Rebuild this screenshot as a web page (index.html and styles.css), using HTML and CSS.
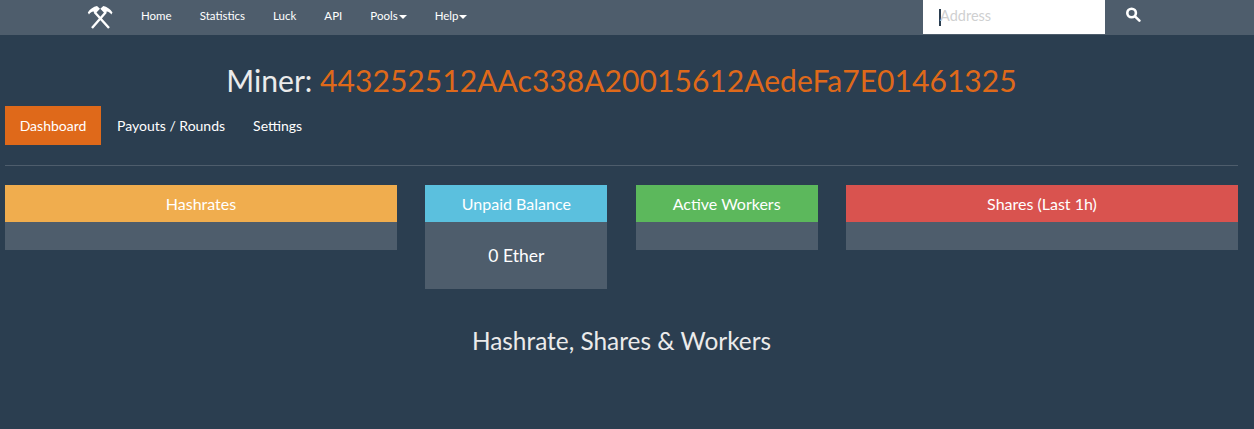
FILE: index.html
```html
<!DOCTYPE html>
<html lang="en">
<head>
<meta charset="utf-8">
<title>Miner</title>
<link rel="stylesheet" href="styles.css">
</head>
<body>
<nav class="navbar">
  <a class="brand" href="#" aria-label="Home">
    <svg class="brand-icon" viewBox="0 0 26 24" width="26" height="24">
      <path class="handle" d="M5 23 L19 7 M22 23 L7.5 7"/>
      <path class="head" d="M0.8 7.5 C3 4 6.5 1.8 10 1 L13 3.8 L8.5 8.5 L6.5 6.5 C4.5 6.6 3.2 7.8 2 9.5 Z"/>
      <path class="head" d="M25.5 7.5 C23.3 4 19.8 1.8 16.3 1 L13.3 3.8 L17.8 8.5 L19.8 6.5 C21.8 6.6 23.1 7.8 24.3 9.5 Z"/>
    </svg>
  </a>
  <ul class="nav-links">
    <li><a href="#">Home</a></li>
    <li><a href="#">Statistics</a></li>
    <li><a href="#">Luck</a></li>
    <li><a href="#">API</a></li>
    <li><a href="#">Pools<span class="caret"></span></a></li>
    <li><a href="#">Help<span class="caret"></span></a></li>
  </ul>
  <form class="search">
    <div class="search-input"><span class="cursor"></span><span class="placeholder">Address</span></div>
    <button class="search-btn" type="button" aria-label="Search">
      <svg viewBox="0 0 15 15" width="15" height="15">
        <circle class="lens" cx="5.6" cy="6" r="4.3"/>
        <path class="lens-handle" d="M9 9.4 L13.4 13.6"/>
      </svg>
    </button>
  </form>
</nav>
<main class="content">
  <h2 class="miner-title">Miner: <span class="address">443252512AAc338A20015612AedeFa7E01461325</span></h2>
  <ul class="tabs">
    <li><a class="tab active" href="#">Dashboard</a></li>
    <li><a class="tab" href="#">Payouts / Rounds</a></li>
    <li><a class="tab" href="#">Settings</a></li>
  </ul>
  <hr class="divider">
  <section class="panels">
    <div class="panel">
      <div class="panel-head warning">Hashrates</div>
      <div class="panel-body"></div>
    </div>
    <div class="panel">
      <div class="panel-head info">Unpaid Balance</div>
      <div class="panel-body filled">0 Ether</div>
    </div>
    <div class="panel">
      <div class="panel-head success">Active Workers</div>
      <div class="panel-body"></div>
    </div>
    <div class="panel">
      <div class="panel-head danger">Shares (Last 1h)</div>
      <div class="panel-body"></div>
    </div>
  </section>
  <h3 class="section-title">Hashrate, Shares &amp; Workers</h3>
</main>
</body>
</html>
```
FILE: styles.css
```css
* { box-sizing: border-box; }
html, body { margin: 0; height: 100%; }
body {
  background: #2b3e50;
  color: #fff;
  font-family: Lato, "Open Sans", sans-serif;
  font-size: 15px;
  overflow: hidden;
}
a { color: inherit; text-decoration: none; }
ul { list-style: none; margin: 0; padding: 0; }

.navbar {
  display: flex;
  align-items: flex-start;
  height: 35px;
  background: #4e5d6c;
  padding-left: 87px;
}
.brand { display: block; padding-top: 5px; height: 35px; width: 26px; }
.brand-icon { display: block; }
.handle { stroke: #fff; stroke-width: 2.4; fill: none; }
.head { fill: #fff; }

.nav-links { display: flex; margin-left: 14px; font-size: 11.5px; }
.nav-links a { display: block; padding: 0 14px; line-height: 32px; }
.caret {
  display: inline-block;
  margin-left: 1px;
  vertical-align: middle;
  border-top: 4px solid #fff;
  border-left: 4px solid transparent;
  border-right: 4px solid transparent;
}

.search { display: flex; margin-left: auto; }
.search-input {
  width: 182px;
  height: 34px;
  background: #fff;
  padding: 0 0 3px 16px;
  display: flex;
  align-items: center;
  font-size: 14.5px;
}
.cursor { width: 2px; height: 17px; margin: 3px -1px 0 0; background: #2b3e50; flex: none; }
.placeholder { color: #cfd0d1; }
.search-btn {
  width: 149px;
  height: 34px;
  padding: 0 0 5px 21px;
  background: none;
  border: 0;
  display: flex;
  align-items: center;
}
.lens { fill: none; stroke: #fff; stroke-width: 2.6; }
.lens-handle { stroke: #fff; stroke-width: 2.6; stroke-linecap: round; }

.content { padding: 0 16px 0 5px; }
.miner-title {
  margin: 0;
  padding-top: 25px;
  font-size: 30.1px;
  font-weight: 400;
  line-height: 41px;
  text-align: center;
  color: #ebebeb;
}
.address { color: #df691a; }

.tabs { display: flex; margin-top: 5px; }
.tab { display: block; padding: 0 14px; line-height: 39px; height: 39px; font-size: 14px; }
.tab.active { background: #df691a; width: 96px; padding: 0; margin-right: 2px; text-align: center; }

.divider { border: 0; border-top: 1px solid #4e5d6c; margin: 20px 0 19px; }

.panels {
  display: grid;
  grid-template-columns: 392fr 182fr 182fr 392fr;
  column-gap: 28.33px;
  align-items: start;
}
.panel-head {
  height: 37px;
  line-height: 38px;
  text-align: center;
  font-size: 16px;
}
.warning { background: #f0ad4e; }
.info { background: #5bc0de; }
.success { background: #5cb85c; }
.danger { background: #d9534f; }
.panel-body { min-height: 28px; background: #4e5d6c; }
.panel-body.filled { height: 67px; line-height: 67px; text-align: center; font-size: 17.5px; }

.section-title {
  margin: 38px 0 0;
  font-size: 24.4px;
  font-weight: 400;
  line-height: 28px;
  text-align: center;
  color: #ebebeb;
}
```
